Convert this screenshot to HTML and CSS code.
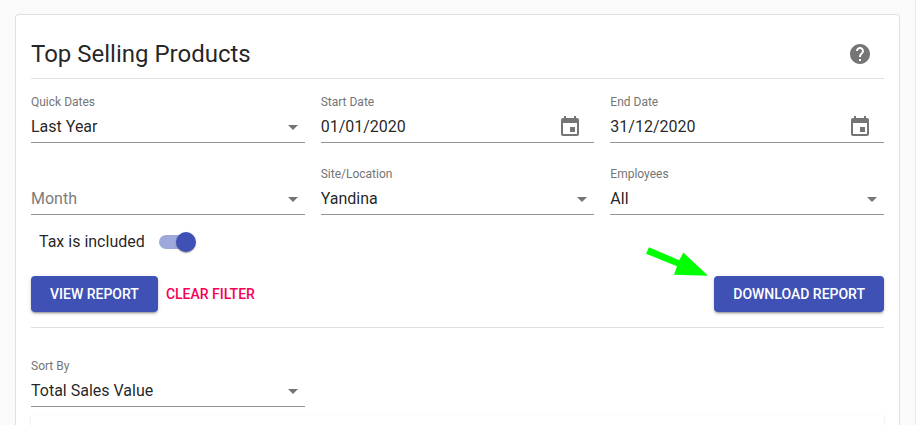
FILE: index.html
```html
<!DOCTYPE html>
<html lang="en">
<head>
  <meta charset="utf-8">
  <meta name="viewport" content="width=device-width, initial-scale=1">
  <title>Top Selling Products</title>
  <link rel="stylesheet" href="styles.css">
</head>
<body>
  <main class="page">
    <section class="card">
      <header class="card-header">
        <h1 class="title">Top Selling Products</h1>
        <button class="icon-button" type="button" aria-label="Help">
          <svg class="icon" viewBox="0 0 24 24"><path d="M12 2C6.48 2 2 6.48 2 12s4.480 10 10 10 10-4.480 10-10S17.520 2 12 2zm1 17h-2v-2h2v2zm2.070-7.750l-.9.920C13.450 12.900 13 13.500 13 15h-2v-.5c0-1.100.45-2.100 1.170-2.830l1.240-1.260c.37-.36.59-.86.59-1.410 0-1.100-.9-2-2-2s-2 .9-2 2H8c0-2.210 1.790-4 4-4s4 1.790 4 4c0 .88-.36 1.680-.93 2.250z"/></svg>
        </button>
      </header>
      <form class="filters">
        <div class="grid">
          <div class="field">
            <label class="label" for="quick">Quick Dates</label>
            <div class="control">
              <select class="input" id="quick"><option>Last Year</option></select>
              <svg class="icon caret" viewBox="0 0 24 24"><path d="M7 10l5 5 5-5z"/></svg>
            </div>
          </div>
          <div class="field">
            <label class="label" for="start">Start Date</label>
            <div class="control">
              <input class="input" id="start" type="text" value="01/01/2020">
              <button class="icon-button compact" type="button" aria-label="Choose start date">
                <svg class="icon" viewBox="0 0 24 24"><path d="M17 12h-5v5h5v-5zM16 1v2H8V1H6v2H5c-1.110 0-1.990.9-1.990 2L3 19c0 1.100.89 2 2 2h14c1.100 0 2-.9 2-2V5c0-1.100-.9-2-2-2h-1V1h-2zm3 18H5V8h14v11z"/></svg>
              </button>
            </div>
          </div>
          <div class="field">
            <label class="label" for="end">End Date</label>
            <div class="control">
              <input class="input" id="end" type="text" value="31/12/2020">
              <button class="icon-button compact" type="button" aria-label="Choose end date">
                <svg class="icon" viewBox="0 0 24 24"><path d="M17 12h-5v5h5v-5zM16 1v2H8V1H6v2H5c-1.110 0-1.990.9-1.990 2L3 19c0 1.100.89 2 2 2h14c1.100 0 2-.9 2-2V5c0-1.100-.9-2-2-2h-1V1h-2zm3 18H5V8h14v11z"/></svg>
              </button>
            </div>
          </div>
          <div class="field">
            <div class="control">
              <select class="input placeholder" id="month" aria-label="Month"><option>Month</option></select>
              <svg class="icon caret" viewBox="0 0 24 24"><path d="M7 10l5 5 5-5z"/></svg>
            </div>
          </div>
          <div class="field">
            <label class="label" for="site">Site/Location</label>
            <div class="control">
              <select class="input" id="site"><option>Yandina</option></select>
              <svg class="icon caret" viewBox="0 0 24 24"><path d="M7 10l5 5 5-5z"/></svg>
            </div>
          </div>
          <div class="field">
            <label class="label" for="employees">Employees</label>
            <div class="control">
              <select class="input" id="employees"><option>All</option></select>
              <svg class="icon caret" viewBox="0 0 24 24"><path d="M7 10l5 5 5-5z"/></svg>
            </div>
          </div>
        </div>
        <div class="tax">
          <label for="tax">Tax is included</label>
          <input class="switch" id="tax" type="checkbox" role="switch" checked>
        </div>
        <div class="actions">
          <button class="button primary" type="button">VIEW REPORT</button>
          <button class="button text" type="button">CLEAR FILTER</button>
          <div class="download">
            <svg class="pointer" viewBox="0 0 62 29" aria-hidden="true"><path d="M3 .3L33.300 13.200 37.300 5.500 62 28.700 28 27.700 31 19.300 0 6.700z"/></svg>
            <button class="button primary" type="button">DOWNLOAD REPORT</button>
          </div>
        </div>
      </form>
      <div class="grid sort">
        <div class="field">
          <label class="label" for="sort">Sort By</label>
          <div class="control">
            <select class="input" id="sort"><option>Total Sales Value</option></select>
            <svg class="icon caret" viewBox="0 0 24 24"><path d="M7 10l5 5 5-5z"/></svg>
          </div>
        </div>
      </div>
      <div class="results"></div>
    </section>
  </main>
</body>
</html>
```
FILE: styles.css
```css
* {
  box-sizing: border-box;
}

body {
  margin: 0;
  background: #fafafa;
  color: rgba(0, 0, 0, 0.87);
  font: 16px/24px Roboto, sans-serif;
}

button,
input,
select {
  margin: 0;
  font: inherit;
  color: inherit;
}

.page {
  display: flex;
  height: 100vh;
  padding: 14px 15px 0;
  overflow: hidden;
  border-right: 1px solid #eee;
}

.card {
  flex: 1;
  min-width: 0;
  padding: 15px 15px 0;
  background: #fff;
  border: 1px solid #e0e0e0;
  border-bottom: 0;
  border-radius: 4px 4px 0 0;
}

.card-header {
  display: flex;
  align-items: center;
  justify-content: space-between;
  border-bottom: 1px solid #e0e0e0;
}

.title {
  margin: 0;
  font-size: 24px;
  line-height: 32px;
  font-weight: 400;
}

.icon-button {
  display: flex;
  padding: 12px;
  border: 0;
  background: none;
  color: #757575;
}

.compact {
  padding: 0 12px;
}

.icon {
  display: block;
  width: 24px;
  height: 24px;
  fill: currentColor;
}

.filters {
  padding: 16px 0 15px;
  border-bottom: 1px solid #e0e0e0;
}

.grid {
  display: grid;
  grid-template-columns: repeat(3, minmax(0, 1fr));
  gap: 24px 16px;
}

.field {
  display: flex;
  flex-direction: column;
  justify-content: flex-end;
}

.label {
  font-size: 12px;
  line-height: 14px;
  padding-bottom: 2px;
  color: #757575;
}

.control {
  position: relative;
  display: flex;
  align-items: center;
  height: 32px;
  border-bottom: 1px solid #949494;
}

.input {
  flex: 1;
  min-width: 0;
  height: 31px;
  padding: 0;
  border: 0;
  outline: 0;
  background: none;
  appearance: none;
}

.placeholder {
  color: #7c7c7c;
}

.caret {
  position: absolute;
  right: 0;
  color: #757575;
  pointer-events: none;
}

.tax {
  display: flex;
  align-items: center;
  gap: 14px;
  height: 38px;
  margin: 8px 0 15px;
  padding-left: 8px;
}

.switch {
  position: relative;
  width: 34px;
  height: 14px;
  border-radius: 7px;
  background: #9fa8da;
  appearance: none;
}

.switch::before {
  content: "";
  position: absolute;
  top: -3px;
  right: -3px;
  width: 20px;
  height: 20px;
  border-radius: 50%;
  background: #3f51b5;
  box-shadow: 0 2px 1px -1px rgba(0, 0, 0, 0.2), 0 1px 1px rgba(0, 0, 0, 0.14), 0 1px 3px rgba(0, 0, 0, 0.12);
}

.actions {
  display: flex;
  gap: 8px;
}

.button {
  height: 36px;
  padding: 0 19px;
  border: 0;
  border-radius: 4px;
  font-size: 14px;
  font-weight: 500;
  white-space: nowrap;
}

.primary {
  background: #3f51b5;
  color: #fff;
  box-shadow: 0 3px 1px -2px rgba(0, 0, 0, 0.2), 0 2px 2px rgba(0, 0, 0, 0.14), 0 1px 5px rgba(0, 0, 0, 0.12);
}

.text {
  padding: 0;
  background: none;
  color: #f50057;
}

.download {
  position: relative;
  margin-left: auto;
}

.pointer {
  position: absolute;
  right: 100%;
  bottom: 100%;
  width: 62px;
  height: 29px;
  margin-right: 6px;
  fill: #0f0;
}

.sort {
  padding: 31px 0 8px;
}

.results {
  height: 400px;
  border-radius: 4px;
  box-shadow: 0 2px 1px -1px rgba(0, 0, 0, 0.2), 0 1px 1px rgba(0, 0, 0, 0.14), 0 1px 3px rgba(0, 0, 0, 0.12);
}
```
